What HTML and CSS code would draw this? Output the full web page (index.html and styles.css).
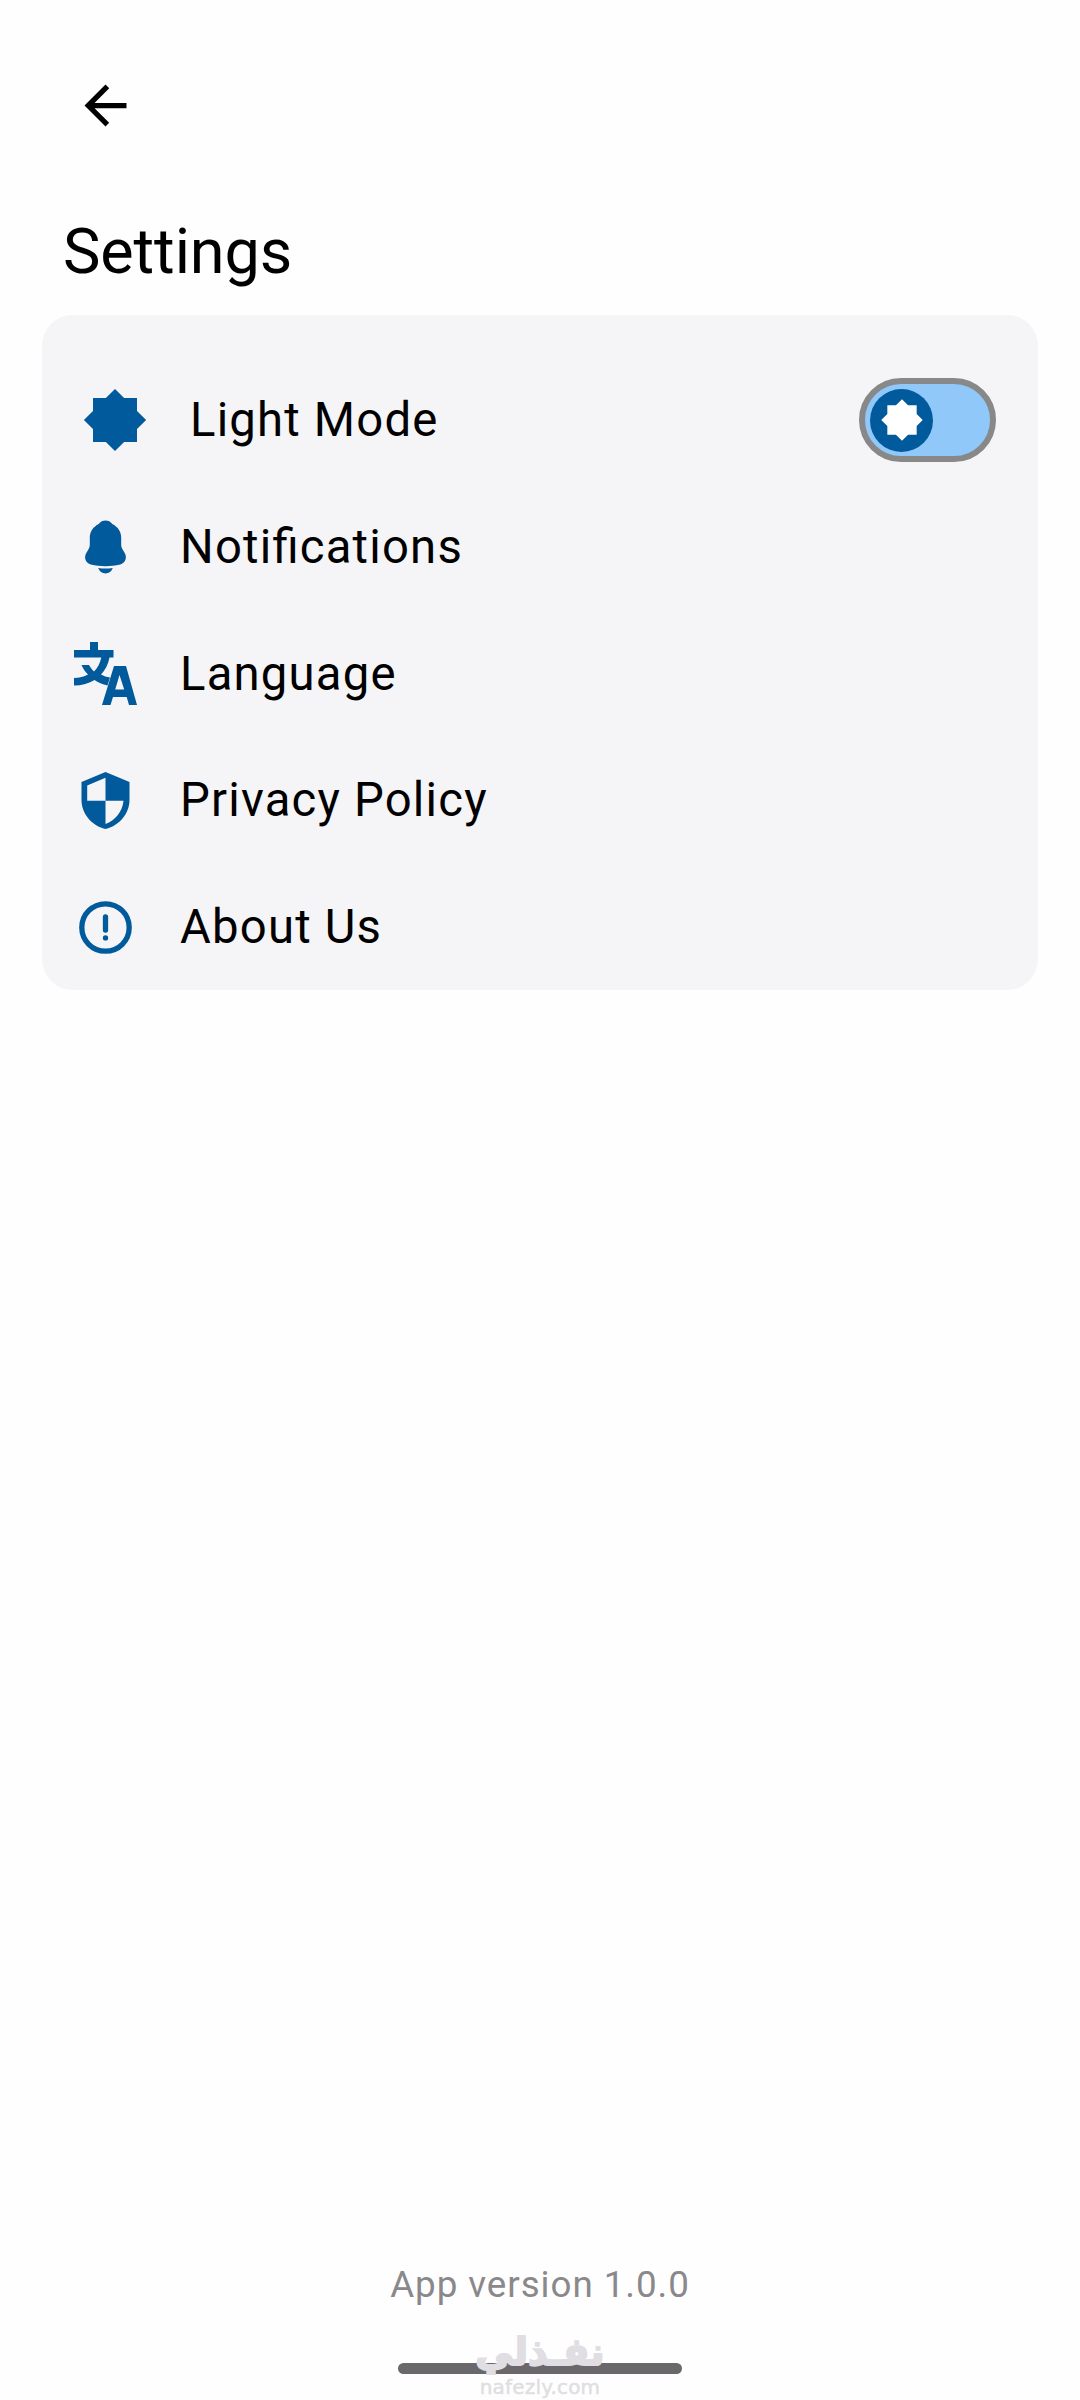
FILE: index.html
```html
<!DOCTYPE html>
<html lang="en">
<head>
  <meta charset="UTF-8" />
  <meta name="viewport" content="width=device-width, initial-scale=1.0"/>
  <title>Settings</title>
  <link rel="stylesheet" href="styles.css">
</head>
<body>

  <header class="top-bar">
    <a class="back" href="#" aria-label="Back">
      <svg viewBox="0 0 24 24"><path d="M20 11H7.83l5.59-5.59L12 4l-8 8 8 8 1.41-1.41L7.83 13H20v-2z"/></svg>
    </a>
  </header>

  <h1>Settings</h1>

  <ul class="card">
    <li class="row row-mode">
      <svg class="icon icon-star" viewBox="0 0 24 24"><path d="M20 8.69V4h-4.69L12 .69 8.69 4H4v4.69L.69 12 4 15.31V20h4.69L12 23.31 15.31 20H20v-4.69L23.31 12 20 8.69z"/></svg>
      <span class="label">Light Mode</span>
      <button class="toggle" aria-label="Light Mode">
        <span class="knob">
          <svg viewBox="0 0 24 24"><path d="M20 8.69V4h-4.69L12 .69 8.69 4H4v4.69L.69 12 4 15.31V20h4.69L12 23.31 15.31 20H20v-4.69L23.31 12 20 8.69z"/></svg>
        </span>
      </button>
    </li>
    <li class="row">
      <svg class="icon" viewBox="0 0 63 63">
        <path d="M31.500 4.500c2.800 0 5 1.200 6.800 3.400C43.500 10.500 47.200 15.500 47.200 21.500v7c0 1.800.4 3.200 1.300 4.700l2.200 3.800c2.700 4.600.6 10.300-4.500 11.500-9.600 2.300-19.800 2.300-29.400 0-5.100-1.200-7.200-6.900-4.500-11.500l2.200-3.800c.9-1.500 1.300-2.900 1.300-4.700v-7c0-6 3.700-11 8.900-13.600C26.500 5.700 28.700 4.500 31.500 4.500z"/>
        <path d="M24.200 52c5 .7 9.600.7 14.600 0-1.200 3.300-3.800 5.500-7.300 5.500s-6.100-2.200-7.300-5.500z"/>
      </svg>
      <span class="label">Notifications</span>
    </li>
    <li class="row">
      <svg class="icon" viewBox="0 0 63 63">
        <path d="M16 0h8v8h15.500v7.500h-4c-1.300 7-4.300 12.600-8.500 17 2.700 1.500 5.700 2.500 9 3l-2.500 8c-5-1-9.500-3-13-5.500C15 41.500 8 43.500 0 43.500v-7.500c5.500 0 10-1.200 14-3.500-3-3-5-6-6.500-9.500H15c1 2 3 4.500 5 6.500 3.500-3.500 6-8 7.300-14H0V8h16z"/>
        <path fill-rule="evenodd" d="M40 24h12l11 39h-8l-2.300-8H39l-2.500 8H28zM45.500 33l-4.300 14.500h9z"/>
      </svg>
      <span class="label">Language</span>
    </li>
    <li class="row">
      <svg class="icon" viewBox="0 0 63 63">
        <path fill-rule="evenodd" d="M31.500 3 55.500 13v18c0 13-9.500 25.500-24 29-14.500-3.500-24-16-24-29V13zM31.500 8.700 13.200 16.500V31.800h18.300zM31.500 31.800v23.200c9.500-3.500 17-12 18-23.200z"/>
      </svg>
      <span class="label">Privacy Policy</span>
    </li>
    <li class="row">
      <svg class="icon icon-line" viewBox="0 0 63 63">
        <circle cx="31.500" cy="31.500" r="23.700"/>
        <path d="M31.500 21v13"/>
        <path d="M31.500 41.800v.1"/>
      </svg>
      <span class="label">About Us</span>
    </li>
  </ul>

  <footer>
    <p class="version">App version 1.0.0</p>
    <div class="nav-bar">
      <div class="watermark">
        <span class="mark-ar" lang="ar" dir="rtl">نفـذلي</span>
        <span class="mark-en">nafezly.com</span>
      </div>
    </div>
  </footer>

</body>
</html>
```
FILE: styles.css
```css
* {
  box-sizing: border-box;
}

body {
  margin: 0;
  height: 2400px;
  display: flex;
  flex-direction: column;
  font-family: Roboto, sans-serif;
  background: #fefefe;
  color: #000;
}

.top-bar {
  padding: 74px 74px 0;
}

.back,
.back svg {
  display: block;
  width: 63px;
  height: 63px;
}

h1 {
  margin: 78px 63px 0;
  height: 100px;
  line-height: 74px;
  font-size: 63px;
  font-weight: 400;
  letter-spacing: -0.1px;
}

.card {
  margin: 0 42px;
  padding: 42px 0 0;
  list-style: none;
  background: #f5f4f6;
  border-radius: 31px;
}

.row {
  height: 126.7px;
  padding: 0 42px 0 31.5px;
  display: flex;
  align-items: center;
}

.row-mode {
  padding-left: 40px;
}

.icon {
  flex: none;
  width: 63px;
  height: 63px;
  margin-right: 43.5px;
  fill: #005a9c;
}

.icon-star {
  width: 66px;
  height: 66px;
  margin-right: 42px;
}

.icon-line {
  fill: none;
  stroke: #005a9c;
  stroke-width: 5.3;
  stroke-linecap: round;
}

.label {
  flex: 1;
  font-size: 47.25px;
  letter-spacing: 1.2px;
  font-feature-settings: "liga" 1;
}

.toggle {
  width: 137px;
  height: 84px;
  padding: 0 5px;
  display: flex;
  align-items: center;
  background: #90c8f9;
  border: 6px solid #888;
  border-radius: 42px;
}

.knob {
  width: 63px;
  height: 63px;
  display: flex;
  align-items: center;
  justify-content: center;
  background: #005a9c;
  border-radius: 50%;
}

.knob svg {
  width: 44px;
  height: 44px;
  fill: #fff;
}

footer {
  margin-top: auto;
  text-align: center;
}

.version {
  margin: 0 0 56px;
  line-height: 44px;
  font-size: 36.75px;
  letter-spacing: 0.95px;
  color: #8a888b;
}

.nav-bar {
  position: relative;
  width: 284px;
  height: 11px;
  margin: 0 auto 26px;
  background: #6a686b;
  border-radius: 6px;
}

/* sits over the gesture bar */
.watermark {
  position: absolute;
  left: 0;
  right: 0;
  top: -33px;
  display: flex;
  flex-direction: column;
  align-items: center;
  color: #e0dee2;
}

.mark-ar {
  font: bold 38px/44px "DejaVu Sans", sans-serif;
  -webkit-text-stroke: 2px #e0dee2;
}

.mark-en {
  margin-top: 1px;
  font: 20px/24px "DejaVu Sans", sans-serif;
  letter-spacing: 0.2px;
  -webkit-text-stroke: 0.5px #e0dee2;
}
```
